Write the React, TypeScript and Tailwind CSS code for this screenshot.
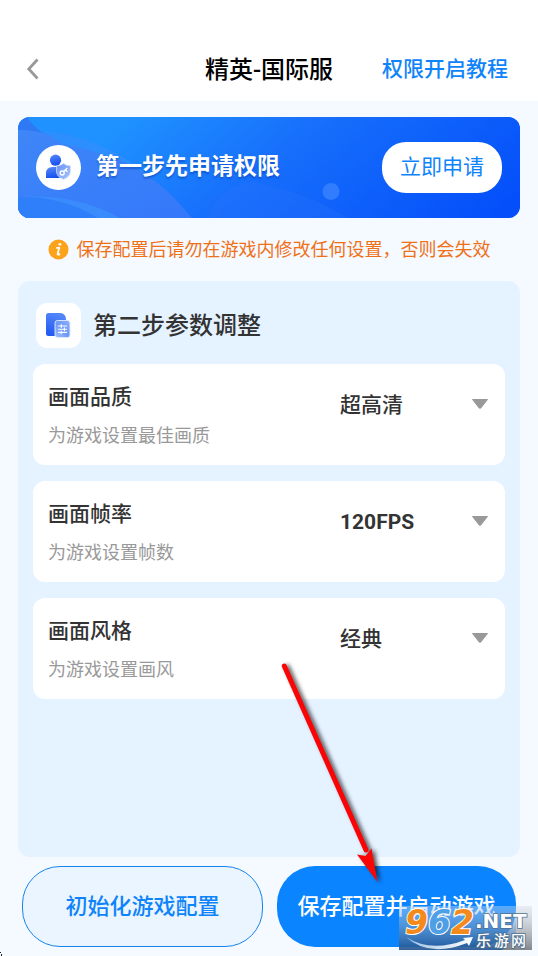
import { useId } from 'react';
import clsx from 'clsx';

const settings = [
  { title: '画面品质', hint: '为游戏设置最佳画质', options: ['超高清', '高清', '标清'] },
  { title: '画面帧率', hint: '为游戏设置帧数', options: ['120FPS', '90FPS', '60FPS'], bold: true },
  { title: '画面风格', hint: '为游戏设置画风', options: ['经典', '鲜艳', '写实'] },
];

const Header = () => {
  return (
    <header className="grid grid-cols-[1fr_auto_1fr] items-center bg-white h-[101px] pt-[38px] px-[26px]">
      <button type="button" aria-label="返回" className="w-5">
        <svg viewBox="0 0 20 24" className="w-5 h-6" fill="none" stroke="#999999" strokeWidth="2.8">
          <path d="M11.5 1.5 L2.8 11 L11.5 20.5" />
        </svg>
      </button>
      <h1 className="text-2xl font-medium text-black">精英-国际服</h1>
      <a href="#tutorial" className="justify-self-end pr-1 text-[21px] font-medium text-[#0f84fa]">
        权限开启教程
      </a>
    </header>
  );
};

const UserShieldIcon = () => (
  <svg viewBox="0 0 45 45" className="size-[45px] shrink-0">
    <defs>
      <linearGradient id="user" x1="0" y1="0" x2="0.3" y2="1">
        <stop offset="0" stopColor="#5b8bfa" />
        <stop offset="1" stopColor="#1650f0" />
      </linearGradient>
      <linearGradient id="shield" x1="0" y1="0" x2="1" y2="1">
        <stop offset="0" stopColor="#6690f5" />
        <stop offset="1" stopColor="#a9c6fc" />
      </linearGradient>
    </defs>
    <circle cx="22.5" cy="22.5" r="22.5" fill="#fff" />
    <circle cx="19.5" cy="15.2" r="5.6" fill="url(#user)" />
    <path d="M10 33 V28.5 Q10 22 16.5 22 H23 Q28 22 28 28 V33 Z" fill="url(#user)" />
    <path
      d="M27.5 18.6 Q30.5 20.8 34.4 20.8 V27 Q34 32 27.5 34.4 Q21 32 20.6 27 V20.8 Q24.5 20.8 27.5 18.6 Z"
      fill="url(#shield)"
      stroke="#d5e3fe"
      strokeWidth="0.8"
    />
    <g fill="none" stroke="#fff" strokeWidth="1.4" strokeLinecap="round">
      <circle cx="26.2" cy="28" r="2" />
      <path d="M27.7 26.6 L30.8 23.6 M29.4 25 L31 26.4" />
    </g>
  </svg>
);

const PanelIcon = () => (
  <svg viewBox="0 0 45 45" className="size-[45px] shrink-0">
    <defs>
      <linearGradient id="doc" x1="0.3" y1="0" x2="0" y2="1">
        <stop offset="0" stopColor="#5285f9" />
        <stop offset="1" stopColor="#1d54ef" />
      </linearGradient>
      <linearGradient id="sliders" x1="1" y1="0" x2="0" y2="1">
        <stop offset="0" stopColor="#8fb2fb" />
        <stop offset="0.5" stopColor="#6d98f8" />
        <stop offset="1" stopColor="#a3c0fb" />
      </linearGradient>
    </defs>
    <rect width="45" height="45" rx="11" fill="#fff" />
    <path d="M12.5 10 H24 Q30 10.5 30 16.5 V33 H12.5 Q10 33 10 30.5 V12.5 Q10 10 12.5 10 Z" fill="url(#doc)" />
    <rect x="19" y="17.5" width="15" height="17" rx="2.5" fill="url(#sliders)" stroke="#e1ebff" strokeWidth="0.9" />
    <path
      d="M22.5 23 H30.5 M22.5 26.2 H30.5 M22.5 29.4 H30.5 M25.3 21.6 V24.4 M28.4 24.8 V27.6 M25.3 28 V30.8"
      stroke="#fff"
      strokeWidth="1.1"
      strokeLinecap="round"
    />
  </svg>
);

const Banner = () => {
  return (
    <section className="relative overflow-hidden flex items-center h-[101px] rounded-xl px-[18px] bg-[#1069fc]">
      <svg viewBox="0 0 502 101" preserveAspectRatio="none" className="absolute inset-0 w-full h-full">
        <defs>
          <linearGradient id="sky" gradientUnits="userSpaceOnUse" x1="110" y1="0" x2="310" y2="240">
            <stop offset="0" stopColor="#1f92ff" />
            <stop offset="0.4" stopColor="#176ffb" />
            <stop offset="1" stopColor="#044ffa" />
          </linearGradient>
          <linearGradient id="hill" x1="0" y1="0" x2="1" y2="1">
            <stop offset="0" stopColor="#3f86f8" />
            <stop offset="1" stopColor="#3478fa" />
          </linearGradient>
        </defs>
        <rect width="502" height="101" fill="url(#sky)" />
        <path d="M190 101 Q205 62 240 66 Q290 76 330 101 Z" fill="#2a74fa" opacity="0.25" />
        <path d="M25 14 Q80 18 132 59 L60 50 Z" fill="#2d8efd" />
        <path d="M0 0 H9 Q20 17 50 30 V101 H0 Z" fill="#2f79f5" />
        <path d="M0 13 C20 13 32 17 45 27 Q72 32 104 44 C130 56 150 72 174 101 H0 Z" fill="url(#hill)" />
        <path d="M0 80 Q58 76 102 101 H0 Z" fill="#3a8bfc" />
        <path d="M0 80 Q45 79 80 101 H0 Z" fill="#307ffa" />
        <circle cx="313" cy="74.5" r="8.5" fill="#3e86ff" opacity="0.75" />
      </svg>
      <div className="relative flex flex-1 items-center">
        <UserShieldIcon />
        <h2 className="ml-[15px] text-[23px] font-bold text-white [text-shadow:0_2px_2px_rgba(0,50,160,0.45)]">
          第一步先申请权限
        </h2>
        <button type="button" className="ml-auto h-[51px] w-[120px] rounded-3xl bg-white text-[21px] text-[#0f84fa]">
          立即申请
        </button>
      </div>
    </section>
  );
};

const Notice = () => {
  return (
    <p className="flex items-center justify-center gap-2 h-[63px] text-lg text-[#f07018]">
      <svg viewBox="0 0 22 22" className="size-[21px] shrink-0">
        <circle cx="11" cy="11" r="10.5" fill="#fca31b" />
        <circle cx="12.5" cy="5.6" r="1.5" fill="#fff" />
        <path d="M9.4 9.3 H11.8 L10 15.8 Q10 16.6 12 16" fill="none" stroke="#fff" strokeWidth="1.9" strokeLinejoin="round" strokeLinecap="round" />
      </svg>
      保存配置后请勿在游戏内修改任何设置，否则会失效
    </p>
  );
};

type SettingProps = {
  title: string;
  hint: string;
  options: string[];
  bold?: boolean;
};

const SettingCard = ({ title, hint, options, bold }: SettingProps) => {
  const id = useId();

  return (
    <div className="flex justify-between rounded-xl bg-white h-[101px] pl-[15px] pr-4 pt-[18px]">
      <div>
        <label htmlFor={id} className="block text-[21px] leading-[30px] font-medium text-[#333333]">
          {title}
        </label>
        <p className="mt-2 text-lg leading-8 text-[#999999]">{hint}</p>
      </div>
      <div className="relative w-[149px]">
        <select
          id={id}
          className={clsx(
            'w-full h-12 appearance-none bg-transparent text-[21px] text-[#333333] outline-none',
            bold ? 'font-bold' : 'font-medium',
          )}
        >
          {options.map((option) => (
            <option key={option}>{option}</option>
          ))}
        </select>
        <svg viewBox="0 0 18 12" className="pointer-events-none absolute right-0 top-4 w-[18px] h-3">
          <path d="M1.5 1.5 H16.5 L9.8 10 Q9 10.8 8.2 10 Z" fill="#999999" stroke="#999999" strokeLinejoin="round" />
        </svg>
      </div>
    </div>
  );
};

const Arrow = () => (
  <svg viewBox="0 0 120 230" className="pointer-events-none absolute left-[275px] bottom-[66px] w-[120px] h-[230px]">
    <g className="[filter:drop-shadow(3px_1px_2px_rgba(0,0,0,0.65))]">
      <path d="M9.3 6 L91 190" stroke="#f90505" strokeWidth="5" strokeLinecap="round" />
      <path d="M102.5 222 L82 194.5 L90.5 196 L96.5 188.5 Z" fill="#f90505" />
    </g>
  </svg>
);

const Watermark = () => (
  <svg viewBox="0 0 133 44" className="pointer-events-none absolute left-[399px] bottom-[6px] w-[133px] h-11">
    <defs>
      <linearGradient id="plate" x1="0" y1="0" x2="0" y2="1">
        <stop offset="0" stopColor="#b9d7f2" stopOpacity="0.45" />
        <stop offset="1" stopColor="#1d4f8b" stopOpacity="0.9" />
      </linearGradient>
      <linearGradient id="plateGray" x1="0" y1="0" x2="0" y2="1">
        <stop offset="0" stopColor="#c9ced4" stopOpacity="0.3" />
        <stop offset="1" stopColor="#82868b" />
      </linearGradient>
      <linearGradient id="swoosh" x1="0" y1="0" x2="1" y2="0">
        <stop offset="0" stopColor="#9cc0e4" />
        <stop offset="1" stopColor="#ffffff" />
      </linearGradient>
    </defs>
    <rect width="117" height="44" fill="url(#plate)" />
    <path d="M117 0 H133 V44 H103 Q116 35 117 22 Z" fill="url(#plateGray)" />
    <path d="M7 31 Q32 47 66 34 L64 32 L74 31 L70 40 L68 37 Q30 52 7 31 Z" fill="url(#swoosh)" />
    <text
      x="6"
      y="28"
      fontFamily="'DejaVu Sans', sans-serif"
      fontWeight="bold"
      fontStyle="italic"
      fontSize="33"
      stroke="#fff"
      strokeWidth="2"
      paintOrder="stroke"
    >
      <tspan fill="#f58a1c">9</tspan>
      <tspan fill="#4f9fe6">6</tspan>
      <tspan fill="#f58a1c">2</tspan>
    </text>
    <g fill="#fff" stroke="#53718f" strokeWidth="1.6" paintOrder="stroke">
      <text x="76" y="22" fontSize="20" fontWeight="bold" fontFamily="'DejaVu Sans', sans-serif">.NET</text>
      <text y="40" fontSize="15" fontWeight="500" fontFamily="'Noto Sans CJK SC', sans-serif">
        <tspan x="77">乐</tspan>
        <tspan x="95">游</tspan>
        <tspan x="112">网</tspan>
      </text>
    </g>
  </svg>
);

const App = () => {
  return (
    <div className="relative flex flex-col min-h-screen overflow-hidden bg-[#f4faff] font-[Roboto,'Noto_Sans_CJK_SC',sans-serif]">
      <Header />
      <main className="flex flex-col flex-1 px-[18px] pt-4">
        <Banner />
        <Notice />
        <section className="flex-1 rounded-xl bg-[#e5f2ff] px-[15px] pt-[22px]">
          <div className="flex items-center gap-3 pl-[3px]">
            <PanelIcon />
            <h2 className="text-2xl font-medium text-[#333333]">第二步参数调整</h2>
          </div>
          <div className="flex flex-col gap-4 mt-4">
            {settings.map((item) => (
              <SettingCard key={item.title} {...item} />
            ))}
          </div>
        </section>
      </main>
      <footer className="flex gap-[14px] px-[22px] py-[9px]">
        <button
          type="button"
          className="flex-1 h-[81px] rounded-[38px] border border-[#1683ee] bg-[#eaf5ff] text-[22px] font-medium text-[#0f84fa]"
        >
          初始化游戏配置
        </button>
        <button type="button" className="flex-1 h-[81px] rounded-[38px] bg-[#0b84ff] text-[22px] font-medium text-white">
          保存配置并启动游戏
        </button>
      </footer>
      <Arrow />
      <Watermark />
      <svg viewBox="0 0 3 4" className="pointer-events-none absolute left-0 bottom-0 w-[3px] h-1">
        <path d="M0 0 H1 V1 H0 Z M1 2 H2 V4 H1 Z" fill="#222" />
      </svg>
    </div>
  );
};

export default App;
